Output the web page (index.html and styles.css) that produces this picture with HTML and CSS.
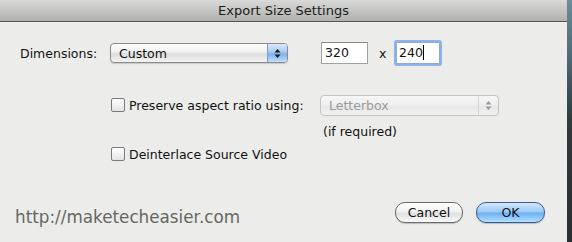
FILE: index.html
```html
<!DOCTYPE html>
<html>
<head>
<meta charset="utf-8">
<link rel="stylesheet" href="styles.css">
</head>
<body>
<div class="screen">
  <div class="window">
    <div class="titlebar">Export Size Settings</div>
    <div class="content">
      <div class="row row-dim">
        <span class="label">Dimensions:</span>
        <div class="popup">
          <span class="popup-text">Custom</span>
          <span class="popup-arrows">
            <svg width="7" height="11" viewBox="0 0 7 11"><path d="M3.5 1 L6.5 4.5 L0.5 4.5 Z M3.5 10 L6.5 6.5 L0.5 6.5 Z" fill="#1a1a1a"/></svg>
          </span>
        </div>
        <div class="field">320</div>
        <span class="times">x</span>
        <div class="field focus">240<span class="caret"></span></div>
      </div>
      <div class="row row-preserve">
        <span class="checkbox"></span>
        <span class="cb-label">Preserve aspect ratio using:</span>
        <div class="popup disabled">
          <span class="popup-text">Letterbox</span>
          <span class="popup-arrows">
            <svg width="7" height="11" viewBox="0 0 7 11"><path d="M3.5 1 L6.5 4.5 L0.5 4.5 Z M3.5 10 L6.5 6.5 L0.5 6.5 Z" fill="#9a9a9a"/></svg>
          </span>
        </div>
      </div>
      <div class="row row-note">(if required)</div>
      <div class="row row-deint">
        <span class="checkbox"></span>
        <span class="cb-label">Deinterlace Source Video</span>
      </div>
      <div class="row row-bottom">
        <span class="watermark">http://maketecheasier.com</span>
        <div class="buttons">
          <div class="btn">Cancel</div>
          <div class="btn default">OK</div>
        </div>
      </div>
    </div>
  </div>
  <div class="desk"></div>
</div>
</body>
</html>
```
FILE: styles.css
```css
html, body {
  margin: 0;
  padding: 0;
}
body {
  width: 572px;
  height: 242px;
  overflow: hidden;
  font-family: "DejaVu Sans", sans-serif;
  font-size: 12.5px;
  color: #111;
}
.screen {
  display: flex;
  width: 572px;
  height: 242px;
}
.window {
  width: 567px;
  height: 242px;
  display: flex;
  flex-direction: column;
  background: #ecedea;
}
.desk {
  flex: 1;
  background: linear-gradient(#6d8c9c 0, #4d6774 60px, #2e3a40 120px, #2a2d2f 100%);
}
.titlebar {
  height: 21px;
  line-height: 21px;
  border-bottom: 1px solid #555;
  background: linear-gradient(#d9d9d9, #b0b0ae);
  text-align: center;
  font-size: 13px;
  color: #1c1c1c;
  flex: none;
}
.content {
  flex: 1;
  display: flex;
  flex-direction: column;
}
.row {
  display: flex;
  align-items: center;
}
.row-dim {
  margin-top: 19px;
  height: 24px;
}
.label {
  margin-left: 20px;
  width: 90px;
}
.popup {
  width: 176px;
  height: 18px;
  border: 1px solid #8a8a8a;
  border-radius: 4px;
  background: linear-gradient(#ffffff, #f0f0f0 45%, #dcdcdc 55%, #f4f4f4);
  display: flex;
  align-items: center;
  box-shadow: 0 1px 1px rgba(0,0,0,0.15);
}
.popup-text {
  flex: 1;
  padding-left: 8px;
}
.popup-arrows {
  width: 19px;
  height: 18px;
  border-left: 1px solid #7c9ad0;
  border-radius: 0 3px 3px 0;
  background: linear-gradient(#dbe9fb, #a9c9f1 45%, #7fb0ee 55%, #bfe0ff);
  display: flex;
  align-items: center;
  justify-content: center;
}
.field {
  margin-left: 33px;
  width: 42px;
  height: 20px;
  line-height: 20px;
  border: 1px solid #a0a0a0;
  border-top-color: #8a8a8a;
  background: #fff;
  padding-left: 3px;
  box-sizing: content-box;
}
.times {
  margin-left: 11px;
  width: 17px;
}
.field.focus {
  margin-left: 0;
  width: 40px;
  height: 20px;
  border: 1px solid #8ea9d4;
  box-shadow: 0 0 0 2px #8cb4ea;
  border-radius: 1px;
  padding-left: 2px;
}
.caret {
  display: inline-block;
  width: 1px;
  height: 15px;
  background: #000;
  vertical-align: -3px;
}
.row-preserve {
  margin-top: 29px;
  height: 22px;
}
.checkbox {
  margin-left: 111px;
  width: 12px;
  height: 12px;
  border: 1px solid #7a7a7a;
  border-radius: 2px;
  background: linear-gradient(#fefefe, #e4e4e4);
  flex: none;
}
.cb-label {
  margin-left: 4px;
}
.row-preserve .cb-label {
  width: 191px;
}
.popup.disabled {
  width: 177px;
  height: 19px;
  border-color: #c4c4c4;
  background: linear-gradient(#f6f6f6, #eeeeee 50%, #e6e6e6 52%, #f2f2f2);
  color: #9a9a9a;
  box-shadow: none;
}
.popup.disabled .popup-arrows {
  background: none;
  border-left: 1px solid #d4d4d4;
  height: 19px;
}
.row-note {
  margin-top: 7px;
  margin-left: 323px;
  height: 16px;
}
.row-deint {
  margin-top: 7px;
  height: 16px;
}
.row-bottom {
  margin-top: 38px;
  height: 24px;
  justify-content: space-between;
}
.watermark {
  margin-left: 15px;
  margin-top: 9px;
  font-size: 16.8px;
  color: #666663;
}
.buttons {
  display: flex;
  gap: 13px;
  margin-right: 22px;
}
.btn {
  width: 66px;
  height: 19px;
  line-height: 19px;
  text-align: center;
  border: 1px solid #6a6a6a;
  border-radius: 10px;
  background: linear-gradient(#ffffff, #f2f2f2 45%, #e0e0e0 55%, #fafafa);
  box-shadow: 0 1px 1px rgba(0,0,0,0.2);
}
.btn.default {
  width: 67px;
  border-color: #3b5a8f;
  background: linear-gradient(#d4e8fb, #9ccaf6 45%, #6fb2f2 55%, #b2e0ff);
}
```
